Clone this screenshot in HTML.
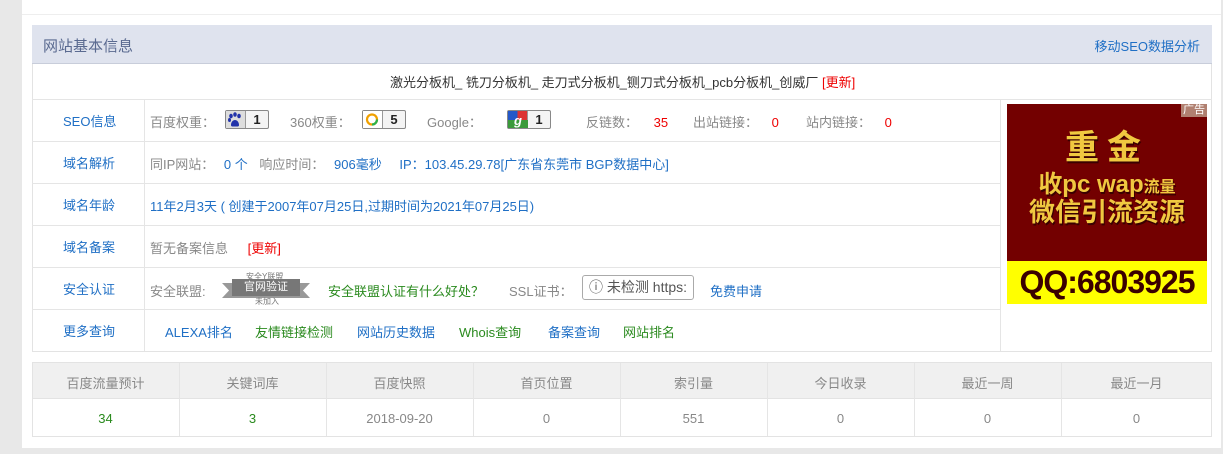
<!DOCTYPE html>
<html><head><meta charset="utf-8"><style>
*{margin:0;padding:0;box-sizing:border-box}
body{width:1223px;height:454px;background:#e8e8e8;font-family:"Liberation Sans","Noto Sans CJK SC",sans-serif;font-size:13px;color:#888;position:relative;overflow:hidden}
.a{position:absolute;white-space:nowrap}
.panel{position:absolute;left:22px;top:0;width:1199px;height:448px;background:#fff}
.hl{position:absolute;background:#e5e5e5}
.b{color:#1f6fc5}.g{color:#2a8a1e}.r{color:#e00}
.badge{display:inline-block;vertical-align:middle;height:19px;border:1px solid #888;border-radius:2px;background:#f4f4f4;font-weight:bold;color:#222;font-size:13px;line-height:17px}
.badge i{display:inline-block;width:20px;height:17px;vertical-align:top;border-right:1px solid #999}
.badge b{display:inline-block;width:22px;text-align:center}
</style></head><body>
<div class="panel"></div>
<div class="hl" style="left:22px;top:14px;width:1199px;height:1px;background:#eee"></div>
<div class="a" style="left:32px;top:25px;width:1180px;height:327px;border:1px solid #e3e3e3;border-top:none"></div>
<div class="a" style="left:32px;top:25px;width:1180px;height:39px;background:#dfe3ee;border-bottom:1px solid #c8cdda"></div>
<div class="a" style="left:43px;top:35px;font-size:15px;color:#5a6a90">网站基本信息</div>
<div class="a b" style="right:23px;top:36px;font-size:13px">移动SEO数据分析</div>
<div class="a" style="left:390px;top:72px;color:#333">激光分板机_ 铣刀分板机_ 走刀式分板机_铡刀式分板机_pcb分板机_创威厂 <span class="r">[更新]</span></div>
<div class="hl" style="left:32px;top:99px;width:1180px;height:1px"></div>
<div class="hl" style="left:32px;top:141px;width:968px;height:1px"></div>
<div class="hl" style="left:32px;top:183px;width:968px;height:1px"></div>
<div class="hl" style="left:32px;top:225px;width:968px;height:1px"></div>
<div class="hl" style="left:32px;top:267px;width:968px;height:1px"></div>
<div class="hl" style="left:32px;top:309px;width:968px;height:1px"></div>
<div class="hl" style="left:144px;top:99px;width:1px;height:252px"></div>
<div class="hl" style="left:1000px;top:99px;width:1px;height:252px"></div>
<div class="a b" style="left:63px;top:111px">SEO信息</div>
<div class="a b" style="left:63px;top:153px">域名解析</div>
<div class="a b" style="left:63px;top:195px">域名年龄</div>
<div class="a b" style="left:63px;top:237px">域名备案</div>
<div class="a b" style="left:63px;top:279px">安全认证</div>
<div class="a b" style="left:63px;top:321px">更多查询</div>
<div class="a" style="left:150px;top:112px">百度权重：</div>
<div class="a" style="left:225px;top:110px"><span class="badge"><i style="background:#ddd;position:relative"><svg width="18" height="17" viewBox="0 0 18 17"><g fill="#2233aa"><ellipse cx="5" cy="5" rx="1.8" ry="2.3"/><ellipse cx="9" cy="3.5" rx="1.8" ry="2.3"/><ellipse cx="13" cy="5" rx="1.8" ry="2.3"/><ellipse cx="3.5" cy="9" rx="1.5" ry="2"/><path d="M5 14c0-3 2-5 4-5s4 2 4 5c0 2-2 1.5-4 1.5S5 16 5 14z"/></g></svg></i><b>1</b></span></div>
<div class="a" style="left:290px;top:112px">360权重：</div>
<div class="a" style="left:362px;top:110px"><span class="badge"><i style="background:#fff"><svg width="18" height="17"><circle cx="9" cy="8.5" r="5" fill="none" stroke="#f0a000" stroke-width="2.2"/><path d="M9 13.5a5 5 0 0 0 5-5" stroke="#2bb24c" stroke-width="2.2" fill="none"/></svg></i><b>5</b></span></div>
<div class="a" style="left:427px;top:112px">Google：</div>
<div class="a" style="left:507px;top:110px"><span class="badge"><i style="background:linear-gradient(90deg,#2458c9 50%,#d33 50%)"><svg width="20" height="17"><rect x="0" y="9" width="20" height="8" fill="#3a9a3a"/><text x="6" y="14" font-size="13" font-weight="bold" fill="#fff" font-family="Liberation Sans">g</text></svg></i><b>1</b></span></div>
<div class="a" style="left:586px;top:112px">反链数： <span class="r" style="margin-left:12px">35</span></div>
<div class="a" style="left:693px;top:112px">出站链接： <span class="r" style="margin-left:10px">0</span></div>
<div class="a" style="left:806px;top:112px">站内链接： <span class="r" style="margin-left:10px">0</span></div>
<div class="a" style="left:150px;top:154px">同IP网站： <span class="b" style="margin-left:6px">0 个</span> <span style="margin-left:8px">响应时间：</span> <span class="b" style="margin-left:6px">906毫秒</span> <span class="b" style="margin-left:14px">IP：103.45.29.78[广东省东莞市 BGP数据中心]</span></div>
<div class="a b" style="left:150px;top:196px">11年2月3天 ( 创建于2007年07月25日,过期时间为2021年07月25日)</div>
<div class="a" style="left:150px;top:238px">暂无备案信息 <span class="r" style="margin-left:16px">[更新]</span></div>
<div class="a" style="left:150px;top:281px">安全联盟:</div>
<div class="a" style="left:222px;top:271px;width:88px;height:34px">
<div style="position:absolute;left:0;top:12px;width:88px;height:15px;background:#999;clip-path:polygon(0 0,100% 0,92% 50%,100% 100%,0 100%,8% 50%)"></div>
<div style="position:absolute;left:10px;top:8px;width:68px;height:17px;background:#777;color:#fff;font-size:11px;text-align:center;line-height:17px">官网验证</div>
<div style="position:absolute;left:24px;top:0;font-size:8px;color:#777">安全Y联盟</div>
<div style="position:absolute;left:33px;top:25px;font-size:8px;color:#777">未加入</div>
</div>
<div class="a g" style="left:328px;top:281px">安全联盟认证有什么好处？</div>
<div class="a" style="left:509px;top:281px">SSL证书：</div>
<div class="a" style="left:582px;top:275px;width:112px;height:25px;border:1px solid #aaa;border-radius:3px;color:#555;font-size:14px;line-height:23px;padding-left:6px;overflow:hidden">ⓘ 未检测 https:</div>
<div class="a b" style="left:710px;top:281px">免费申请</div>
<div class="a b" style="left:165px;top:322px">ALEXA排名</div>
<div class="a g" style="left:255px;top:322px">友情链接检测</div>
<div class="a b" style="left:357px;top:322px">网站历史数据</div>
<div class="a g" style="left:459px;top:322px">Whois查询</div>
<div class="a b" style="left:548px;top:322px">备案查询</div>
<div class="a g" style="left:623px;top:322px">网站排名</div>
<div class="a" style="left:1007px;top:104px;width:200px;height:200px;background:#730000"></div>
<div class="a" style="left:1007px;top:261px;width:200px;height:43px;background:#ffff00"></div>
<div class="a" style="left:1181px;top:104px;width:26px;height:13px;background:#b08070;color:#fff;font-size:11px;line-height:13px;text-align:center">广告</div>
<div class="a" style="left:1007px;top:120px;width:200px;text-align:center;font-size:34px;font-weight:bold;color:#f0c840;letter-spacing:8px;text-shadow:1px 2px 0 #3a0000">重金</div>
<div class="a" style="left:1007px;top:164px;width:200px;text-align:center;font-size:24px;font-weight:bold;color:#f0c840;text-shadow:1px 2px 0 #3a0000">收pc wap<span style="font-size:16px">流量</span></div>
<div class="a" style="left:1007px;top:192px;width:200px;text-align:center;font-size:26px;font-weight:bold;color:#f0c840;text-shadow:1px 2px 0 #3a0000">微信引流资源</div>
<div class="a" style="left:1007px;top:264px;width:200px;text-align:center;font-size:32px;font-weight:bold;color:#3a0000;letter-spacing:-1px">QQ:6803925</div>
<div class="a" style="left:32px;top:362px;width:1180px;height:75px;border:1px solid #e3e3e3"></div>
<div class="a" style="left:33px;top:363px;width:1178px;height:36px;background:#f0f0f0;border-bottom:1px solid #e3e3e3"></div>
<div class="hl" style="left:179px;top:363px;width:1px;height:73px"></div>
<div class="hl" style="left:326px;top:363px;width:1px;height:73px"></div>
<div class="hl" style="left:473px;top:363px;width:1px;height:73px"></div>
<div class="hl" style="left:620px;top:363px;width:1px;height:73px"></div>
<div class="hl" style="left:767px;top:363px;width:1px;height:73px"></div>
<div class="hl" style="left:914px;top:363px;width:1px;height:73px"></div>
<div class="hl" style="left:1061px;top:363px;width:1px;height:73px"></div>
<div class="a" style="left:32px;top:373px;width:1180px;display:flex;text-align:center">
<div style="width:147px">百度流量预计</div><div style="width:147px">关键词库</div><div style="width:147px">百度快照</div><div style="width:147px">首页位置</div><div style="width:147px">索引量</div><div style="width:147px">今日收录</div><div style="width:147px">最近一周</div><div style="width:151px">最近一月</div></div>
<div class="a" style="left:32px;top:411px;width:1180px;display:flex;text-align:center">
<div style="width:147px" class="g">34</div><div style="width:147px" class="g">3</div><div style="width:147px">2018-09-20</div><div style="width:147px">0</div><div style="width:147px">551</div><div style="width:147px">0</div><div style="width:147px">0</div><div style="width:151px">0</div></div>
</body></html>
